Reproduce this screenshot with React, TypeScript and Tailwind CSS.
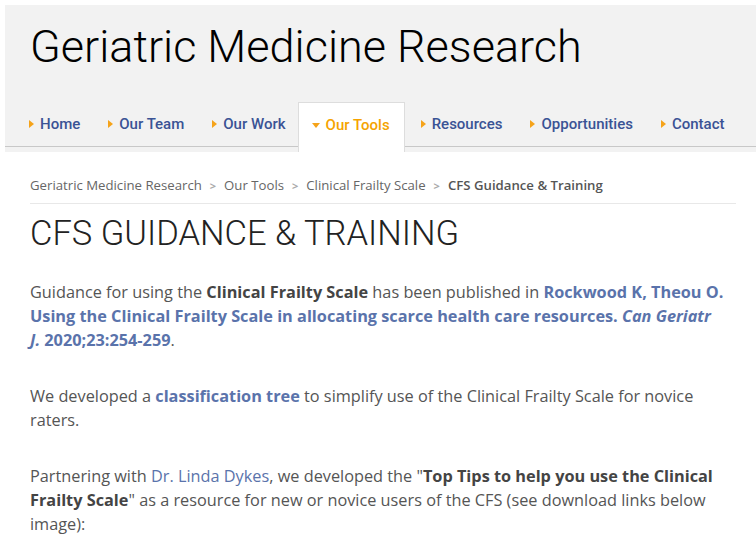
import React from "react";

const navItems = [
  { label: "Home", active: false },
  { label: "Our Team", active: false },
  { label: "Our Work", active: false },
  { label: "Our Tools", active: true },
  { label: "Resources", active: false },
  { label: "Opportunities", active: false },
  { label: "Contact", active: false },
];

function RightTri() {
  return (
    <svg width="5" height="8" viewBox="0 0 5 8" className="shrink-0">
      <path d="M0 0 L5 4 L0 8 Z" fill="#f5a31a" />
    </svg>
  );
}
function DownTri() {
  return (
    <svg width="8" height="5" viewBox="0 0 8 5" className="shrink-0">
      <path d="M0 0 L8 0 L4 5 Z" fill="#f5a31a" />
    </svg>
  );
}

function Sep() {
  return <span className="mx-[8px] text-[11px] text-[#aaaaaa] font-bold">&gt;</span>;
}

export default function App() {
  const font = { fontFamily: "Roboto, 'Liberation Sans', sans-serif" };
  const body = { fontFamily: "'Open Sans', 'Liberation Sans', sans-serif" };
  return (
    <div className="bg-white min-h-[536px] pt-[5px] pl-[5px] overflow-hidden" style={font}>
      <header className="bg-[#f2f2f2]">
        <div className="pl-[25px] pt-[18px] h-[97px]">
          <h1 className="text-[45px] leading-[48px] font-light text-black">Geriatric Medicine Research</h1>
        </div>
        <nav className="flex items-start pl-[8px] h-[44px]">
          {navItems.map((it) =>
            it.active ? (
              <div
                key={it.label}
                className="relative z-10 flex items-center gap-[6px] h-[50px] -mb-[6px] pb-[4px] pl-[13px] pr-[14px] bg-white border border-b-0 border-[#dddddd]"
              >
                <DownTri />
                <span className="text-[15px] font-medium text-[#f5a300]">{it.label}</span>
              </div>
            ) : (
              <div key={it.label} className="flex items-center gap-[6px] h-[44px] pl-[16px] pr-[12px]">
                <RightTri />
                <span className="text-[15px] font-medium text-[#3a5395]">{it.label}</span>
              </div>
            )
          )}
        </nav>
      </header>
      <div className="h-[1px] bg-[#c8c8c8]" />
      <div className="h-[5px] bg-[#f2f2f2]" />
      <main className="pl-[25px] pr-[20px]">
        <div
          className="flex items-center pt-[24px] pb-[7px] border-b border-[#e8e8e8] text-[13.2px] text-[#666666]"
          style={body}
        >
          <span>Geriatric Medicine Research</span>
          <Sep />
          <span>Our Tools</span>
          <Sep />
          <span>Clinical Frailty Scale</span>
          <Sep />
          <span className="font-semibold text-[#555555]">CFS Guidance &amp; Training</span>
        </div>
        <h2 className="mt-[7px] text-[34.5px] leading-[44px] font-light text-[#222222]">CFS GUIDANCE &amp; TRAINING</h2>
        <div className="mt-[25px] pr-[6px] text-[16.3px] leading-[24px] text-[#555555]" style={body}>
          <p>
            Guidance for using the <b className="font-bold text-[#444444]">Clinical Frailty Scale</b> has been published in{" "}
            <a className="font-bold text-[#5a73ab]">
              Rockwood K, Theou O. Using the Clinical Frailty Scale in allocating scarce health care resources.{" "}
              <i>
                Can Geriatr
                <br />
                J.
              </i>{" "}
              2020;23:254-259
            </a>
            .
          </p>
          <p className="mt-[32px]">
            We developed a <a className="font-bold text-[#5a73ab]">classification tree</a> to simplify use of the Clinical
            Frailty Scale for novice raters.
          </p>
          <p className="mt-[32px]">
            Partnering with <a className="text-[#5a73ab]">Dr. Linda Dykes</a>, we developed the "
            <b className="font-bold text-[#444444]">Top Tips to help you use the Clinical Frailty Scale</b>" as a resource
            for new or novice users of the CFS (see download links below image):
          </p>
        </div>
      </main>
    </div>
  );
}
